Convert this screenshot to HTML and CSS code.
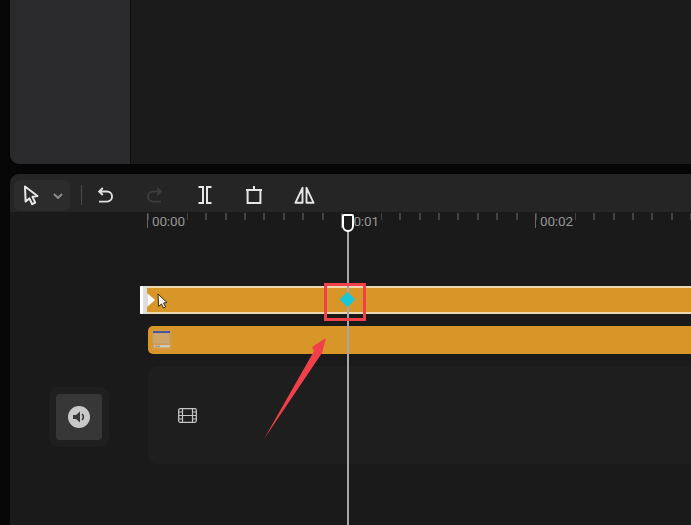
FILE: index.html
```html
<!DOCTYPE html>
<html lang="en">
<head>
<meta charset="utf-8">
<title>Timeline</title>
<link rel="stylesheet" href="styles.css">
</head>
<body>
<div class="app">
  <section class="top-panel">
    <div class="top-side"></div>
    <div class="top-main"></div>
  </section>
  <section class="editor">
    <div class="toolbar">
      <div class="select-group">
        <svg class="ic-cursor" viewBox="0 0 16 21"><path d="M2 1.5 L14.5 11 L9.5 11.8 L12.2 17.6 L9.2 19.2 L6.4 13.4 L2.6 16.6 Z" fill="none" stroke="#e6e6e6" stroke-width="2" stroke-linejoin="round"/></svg>
        <svg class="ic-chev" viewBox="0 0 10 6"><path d="M1 1 L5 5 L9 1" fill="none" stroke="#8c8c8c" stroke-width="2"/></svg>
      </div>
      <div class="divider"></div>
      <svg class="ic ic-undo" viewBox="0 0 15 16"><path d="M4.8 1 L1.2 4.5 L4.8 8 M1.8 4.5 H9 A5 5 0 0 1 9 14.6 H1" fill="none" stroke="#e0e0e0" stroke-width="1.9"/></svg>
      <svg class="ic ic-redo" viewBox="0 0 15 16"><path d="M10.2 1 L13.8 4.5 L10.2 8 M13.2 4.5 H6 A5 5 0 0 0 6 14.6 H14" fill="none" stroke="#3d3d3e" stroke-width="1.9"/></svg>
      <svg class="ic ic-split" viewBox="0 0 14 18"><path d="M0.5 1 H5 V17 H0.5 M13.5 1 H9 V17 H13.5" fill="none" stroke="#e6e6e6" stroke-width="2"/></svg>
      <svg class="ic ic-delete" viewBox="0 0 16 18"><path d="M0 4 H16 M8 0 V4 M1.6 4 V17 H14.4 V4" fill="none" stroke="#e6e6e6" stroke-width="2"/></svg>
      <svg class="ic ic-mirror" viewBox="0 0 21 18"><path d="M8.5 1.8 V16.8 H1.4 Z M12.5 1.8 V16.8 H19.6 Z" fill="none" stroke="#e6e6e6" stroke-width="1.9" stroke-linejoin="round"/></svg>
    </div>
    <div class="ruler">
      <div class="second"><span>00:00</span></div>
      <div class="second"><span>00:01</span></div>
      <div class="second"><span>00:02</span></div>
    </div>
    <div class="tracks">
      <div class="clip clip-active">
        <div class="handle"></div>
        <svg class="mouse" viewBox="0 0 11 16"><path d="M1 1 L10 9.5 L6.6 10 L8.6 14 L6.4 15 L4.5 11 L1.6 13.4 Z" fill="#f2f2f2" stroke="#3a2a10" stroke-width="1"/></svg>
      </div>
      <div class="clip clip-second">
        <svg class="thumb" viewBox="0 0 20 20">
          <rect x="0" y="0" width="20" height="20" fill="#d39a44"/>
          <rect x="1" y="1" width="17" height="2" fill="#4a559c"/>
          <rect x="2" y="4" width="15" height="9" fill="#cfa565" stroke="#b9ab95" stroke-width="0.8"/>
          <rect x="2" y="15" width="16" height="2.4" fill="#cfcabf"/>
          <rect x="3" y="15.6" width="5" height="1.2" fill="#9a917f"/>
        </svg>
      </div>
      <div class="main-row">
        <div class="audio-btn">
          <div class="audio-inner">
            <svg class="ic-audio" viewBox="0 0 22 22">
              <circle cx="11" cy="11" r="11" fill="#c9c9c9"/>
              <path d="M5 9 H8 L12 5.5 V16.5 L8 13 H5 Z" fill="#3a3a3a"/>
              <path d="M14 8 A4 4 0 0 1 14 14" fill="none" stroke="#3a3a3a" stroke-width="1.6"/>
            </svg>
          </div>
        </div>
        <div class="main-track">
          <svg class="ic-film" viewBox="0 0 19 15">
            <rect x="0.7" y="0.7" width="17.6" height="13.6" rx="1.5" fill="none" stroke="#c4c4c4" stroke-width="1.3"/>
            <path d="M4.5 0.7 V14.3 M14.5 0.7 V14.3 M4.5 7.5 H14.5 M0.7 4 H4.5 M0.7 7.5 H4.5 M0.7 11 H4.5 M14.5 4 H18.3 M14.5 7.5 H18.3 M14.5 11 H18.3" stroke="#c4c4c4" stroke-width="1.2" fill="none"/>
          </svg>
        </div>
      </div>
    </div>
    <div class="playhead">
      <div class="playhead-cap"></div>
    </div>
    <div class="keyframe"></div>
    <div class="callout"></div>
    <svg class="arrow" viewBox="0 0 70 108"><polygon points="64,1 60,16 2,102 52,14 50,10" fill="#f0404a"/></svg>
  </section>
</div>
</body>
</html>
```
FILE: styles.css
```css
* { box-sizing: border-box; }
html, body { margin: 0; height: 100%; }
body { background: #060606; overflow: hidden; font-family: Roboto, "Liberation Sans", Arial, sans-serif; }
.app { display: flex; flex-direction: column; gap: 10px; height: 525px; padding-left: 10px; }

.top-panel { display: flex; height: 164px; flex: none; border-bottom-left-radius: 9px; overflow: hidden; }
.top-side { width: 121px; background: #2a2a2c; border-right: 1px solid #0d0d0d; flex: none; }
.top-main { flex: 1; background: #1b1b1c; }

.editor { position: relative; flex: 1; background: #1a1a1b; border-top-left-radius: 9px; overflow: hidden; }

.toolbar { display: flex; align-items: center; height: 38px; background: #252526; padding-left: 4px; }
.select-group { display: flex; align-items: center; width: 56px; height: 31px; margin-top: 4px; padding-left: 9px; background: #2c2c2d; border-radius: 6px; }
.ic-cursor { width: 16px; height: 21px; margin-top: 1px; }
.ic-chev { width: 10px; height: 6px; margin-left: 14px; margin-top: 2px; }
.divider { width: 1px; height: 20px; margin: 4px 0 0 11px; background: #4a4a4b; }
.ic { flex: none; margin-top: 4px; }
.ic-undo { width: 15px; height: 16px; margin-left: 16px; margin-top: 3px; }
.ic-redo { width: 15px; height: 16px; margin-left: 34px; margin-top: 3px; }
.ic-split { width: 14px; height: 18px; margin-left: 36px; }
.ic-delete { width: 16px; height: 18px; margin-left: 34px; margin-top: 3px; }
.ic-mirror { width: 21px; height: 18px; margin-left: 32px; margin-top: 3px; }

.ruler { display: flex; height: 20px; padding-left: 137px; }
.second {
  flex: none;
  width: 194px;
  height: 16px;
  padding: 1px 0 0 5px;
  font-size: 13.5px;
  line-height: 16px;
  letter-spacing: -0.15px;
  color: #959595;
  background:
    linear-gradient(#666, #666) 0 2px / 1px 14px no-repeat,
    repeating-linear-gradient(90deg, #434343 0, #434343 2px, transparent 2px, transparent 19.4px) 0 1px / 100% 7px no-repeat;
}
.second span { display: inline-block; background: #1a1a1b; padding-right: 2px; }

.tracks { padding-top: 54px; }
.clip { position: relative; height: 28px; margin-left: 138px; background: #d89528; }
.clip-active { border-top: 2px solid #ecd9b2; border-bottom: 2px solid #ecd9b2; margin-left: 136px; }
.clip-second { margin-top: 12px; border-radius: 5px 0 0 5px; }
.handle {
  position: absolute;
  left: -6px;
  top: -2px;
  width: 16px;
  height: 28px;
  background: linear-gradient(90deg, #fff 0, #fff 3px, #dedede 3px, #dedede 8px, #fff 8px);
  clip-path: polygon(0 0, 7px 0, 7px 7px, 15px 14px, 7px 21px, 7px 28px, 0 28px);
}
.mouse { position: absolute; left: 11px; top: 5px; width: 11px; height: 16px; }
.thumb { position: absolute; left: 4px; top: 4px; width: 20px; height: 20px; }

.main-row { display: flex; margin-top: 12px; }
.audio-btn { display: flex; align-items: center; justify-content: center; flex: none; width: 60px; height: 60px; margin: 21px 0 0 39px; background: #1f1f20; border-radius: 9px; }
.audio-inner { display: flex; align-items: center; justify-content: center; width: 46px; height: 46px; background: #373738; border-radius: 4px; }
.ic-audio { width: 22px; height: 22px; }
.main-track { display: flex; align-items: center; flex: 1; height: 98px; margin-left: 39px; padding-left: 30px; background: #1e1e1f; border-radius: 9px 0 0 9px; }
.ic-film { width: 19px; height: 15px; }

.playhead { position: absolute; left: 337px; top: 48px; bottom: 0; width: 2px; background: #a6a6a6; }
.playhead-cap { position: absolute; left: -5px; top: -8px; width: 12px; height: 18px; background: #1a1a1b; border: 2px solid #fff; border-radius: 2px 2px 6px 6px; }
.keyframe { position: absolute; left: 332px; top: 120px; width: 11px; height: 11px; background: #18c8da; transform: rotate(45deg); border-radius: 1px; }
.callout { position: absolute; left: 314px; top: 109px; width: 42px; height: 38px; border: 3px solid #f0404a; }
.arrow { position: absolute; left: 252px; top: 163px; width: 70px; height: 108px; }
```
